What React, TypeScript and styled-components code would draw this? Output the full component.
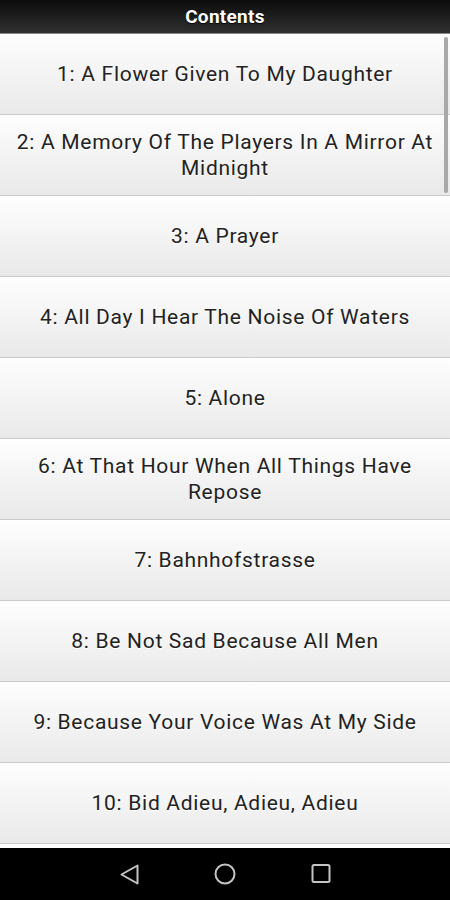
import React from 'react';
import styled, { createGlobalStyle } from 'styled-components';

const Global = createGlobalStyle`
  html, body {
    margin: 0;
    padding: 0;
    background: #fff;
  }
  body {
    font-family: Roboto, "Liberation Sans", Arial, sans-serif;
  }
`;

const Screen = styled.div`
  width: 450px;
  height: 900px;
  display: flex;
  flex-direction: column;
  overflow: hidden;
  background: #fff;
`;

const Header = styled.header`
  height: 33px;
  flex: none;
  display: flex;
  align-items: center;
  justify-content: center;
  background: linear-gradient(#0c0c0c, #303030);
  border-bottom: 1px solid #8a8a8a;
  color: #fff;
  font-size: 19px;
  font-weight: 700;
  letter-spacing: 0.3px;
  text-shadow: 0 1px 1px #000;
`;

const List = styled.div`
  flex: 1;
  position: relative;
  overflow: hidden;
`;

const Row = styled.div`
  height: 80px;
  box-sizing: content-box;
  border-bottom: 1px solid #cbcbcb;
  display: flex;
  align-items: center;
  justify-content: center;
  padding: 0 14px;
  text-align: center;
  background: linear-gradient(#fefefe, #e9e9e9);
  color: #222;
  font-size: 21px;
  letter-spacing: 0.7px;
  line-height: 26px;
  text-shadow: 0 1px 0 #fff;
`;

const Scrollbar = styled.div`
  position: absolute;
  top: 3px;
  right: 2px;
  width: 4px;
  height: 156px;
  border-radius: 2px;
  background: #a9a9a9;
`;

const NavBar = styled.nav`
  height: 52px;
  flex: none;
  background: #000;
  display: flex;
  align-items: center;
  justify-content: center;
  gap: 72px;
`;

const NavIcon = styled.svg`
  width: 24px;
  height: 24px;
  stroke: #c4c4c4;
  stroke-width: 2;
  fill: none;
  stroke-linejoin: round;
`;

const poems = [
  '1: A Flower Given To My Daughter',
  '2: A Memory Of The Players In A Mirror At Midnight',
  '3: A Prayer',
  '4: All Day I Hear The Noise Of Waters',
  '5: Alone',
  '6: At That Hour When All Things Have Repose',
  '7: Bahnhofstrasse',
  '8: Be Not Sad Because All Men',
  '9: Because Your Voice Was At My Side',
  '10: Bid Adieu, Adieu, Adieu',
];

export default function App() {
  return (
    <Screen>
      <Global />
      <Header>Contents</Header>
      <List>
        {poems.map((p) => (
          <Row key={p}>{p}</Row>
        ))}
        <Scrollbar />
      </List>
      <NavBar>
        <NavIcon viewBox="0 0 24 24">
          <path d="M20.5 3.5 L20.5 21.5 L4.5 12.5 Z" />
        </NavIcon>
        <NavIcon viewBox="0 0 24 24">
          <circle cx="12" cy="12" r="9.5" />
        </NavIcon>
        <NavIcon viewBox="0 0 24 24">
          <rect x="3.5" y="3" width="17" height="17" rx="1.5" />
        </NavIcon>
      </NavBar>
    </Screen>
  );
}
